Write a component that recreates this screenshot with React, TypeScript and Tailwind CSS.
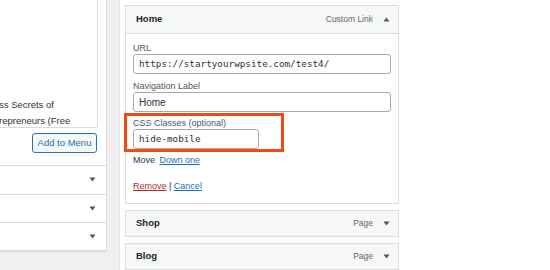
import { ReactNode } from "react";

const sans = { fontFamily: '"Liberation Sans", Arial, sans-serif' };
const mono = { fontFamily: '"DejaVu Sans Mono", monospace' };

function Caret({ up }: { up?: boolean }) {
    return (
        <svg width="7" height="5" viewBox="0 0 7 5" className="shrink-0">
            {up ? <path d="M0.5 4.5 L3.5 0.5 L6.5 4.5 Z" fill="#50575e" /> : <path d="M0.5 0.5 L3.5 4.5 L6.5 0.5 Z" fill="#50575e" />}
        </svg>
    );
}

function SideRow() {
    return (
        <div className="h-[28.5px] flex items-center justify-end pr-[10px] border-b border-[#dcdcde]">
            <Caret />
        </div>
    );
}

function ItemHeader({ title, kind, up, h }: { title: string; kind: string; up?: boolean; h: string }) {
    return (
        <div className={`${h} flex items-center pl-[10px] pr-[8px] bg-[#f6f7f7]`}>
            <span className="text-[9.5px] font-bold text-[#1d2327]">{title}</span>
            <span className="ml-auto text-[8.5px] text-[#646970] mr-[10px]">{kind}</span>
            <Caret up={up} />
        </div>
    );
}

function Field({ label, children }: { label: string; children: ReactNode }) {
    return (
        <div className="flex flex-col">
            <span className="text-[9px] text-[#50575e] leading-[12px] h-[12px]">{label}</span>
            {children}
        </div>
    );
}

export default function App() {
    return (
        <div className="w-[550px] h-[270px] bg-white flex overflow-hidden" style={sans}>
            <div className="w-[120px] h-full shrink-0 bg-[#f0f0f1] border-r border-[#e4e4e6]">
                <div className="w-[107px] h-[251px] bg-white border-r border-b border-[#dcdcde]">
                    <div className="w-[98px] h-[128px] border-r border-b border-[#dcdcde] flex flex-col justify-end text-[9.5px] text-[#2c3338]">
                        <div className="leading-[15px] -ml-[1px]">ss Secrets of</div>
                        <div className="leading-[15px] h-[15px] -ml-[1px] translate-y-[1px]">repreneurs (Free</div>
                    </div>
                    <div className="flex justify-end pr-[9px] pt-[5px]">
                        <button className="h-[20px] w-[65px] rounded-[3px] border border-[#2271b1] bg-[#f6f7f7] text-[9.5px] text-[#2271b1]">Add to Menu</button>
                    </div>
                    <div className="mt-[12px] border-t border-[#dcdcde]">
                        <SideRow />
                        <SideRow />
                        <SideRow />
                    </div>
                </div>
            </div>
            <div className="flex flex-col pl-[5px] pt-[5px] gap-[6px]">
                <div className="w-[274px] border border-[#dcdcde] shrink-0">
                    <div className="border-b border-[#dcdcde]">
                        <ItemHeader title="Home" kind="Custom Link" up h="h-[27px]" />
                    </div>
                    <div className="px-[7px] pt-[8px] pb-[10px] flex flex-col">
                        <Field label="URL">
                            <div className="h-[20px] w-[258px] border border-[#a7aaad] rounded-[3px] flex items-center px-[5px] text-[9.3px] text-[#2c3338]" style={mono}>https://startyourwpsite.com/test4/</div>
                        </Field>
                        <div className="mt-[6px]">
                            <Field label="Navigation Label">
                                <div className="h-[20px] w-[258px] border border-[#a7aaad] rounded-[3px] flex items-center px-[5px] text-[10px] text-[#2c3338]">Home</div>
                            </Field>
                        </div>
                        <div className="mt-[1px] -ml-[9px] px-[6px] pt-[1px] w-[160px] border-[3px] border-[#f24a12]">
                            <Field label="CSS Classes (optional)">
                                <div className="h-[20px] w-[126px] border border-[#a7aaad] rounded-[3px] flex items-center px-[5px] text-[9.3px] text-[#2c3338]" style={mono}>hide-mobile</div>
                            </Field>
                        </div>
                        <div className="mt-[1px] text-[9px] text-[#2c3338] leading-[14px]">
                            Move <span className="ml-[2px] text-[#2271b1] underline">Down one</span>
                        </div>
                        <div className="text-[9px] leading-[14px] mt-[12px] text-[#2c3338]">
                            <span className="text-[#b32d2e] underline">Remove</span> | <span className="text-[#2271b1] underline">Cancel</span>
                        </div>
                    </div>
                </div>
                <div className="w-[274px] border border-[#dcdcde] shrink-0">
                    <ItemHeader title="Shop" kind="Page" h="h-[25px]" />
                </div>
                <div className="w-[274px] border border-[#dcdcde] shrink-0">
                    <ItemHeader title="Blog" kind="Page" h="h-[25px]" />
                </div>
            </div>
        </div>
    );
}
